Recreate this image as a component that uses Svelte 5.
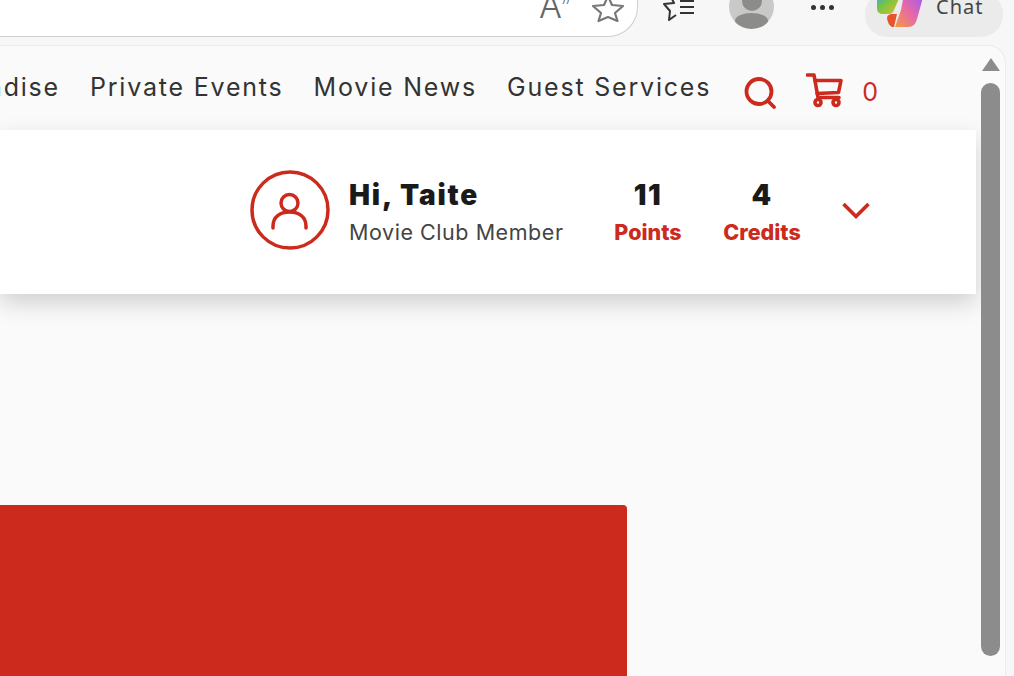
<script>
  const links = ['Merchandise', 'Private Events', 'Movie News', 'Guest Services'];
  const stats = [
    { value: 11, label: 'Points' },
    { value: 4, label: 'Credits' }
  ];
</script>

<div class="browser">
  <header class="toolbar">
    <div class="address">
      <span class="read-aloud">A<sup>))</sup></span>
      <svg class="star" width="34" height="30" viewBox="0 0 34 30" fill="none" stroke="#777" stroke-width="2.200" stroke-linejoin="round">
        <path d="M17 -3 L21 6 L32 7 L24 14 L26.500 22 L17 18 L7.500 22 L10 14 L2 7 L13 6 Z" />
      </svg>
    </div>
    <svg class="favs" width="34" height="24" viewBox="0 0 34 24" fill="none" stroke="#333" stroke-width="2" stroke-linejoin="round">
      <path d="M9 -3 L12 3 L2 4 L8 11 L7 20 L14 15" />
      <path d="M18 1 H32 M18 7 H32 M18 13 H32" />
    </svg>
    <div class="avatar"><span class="head"></span><span class="body"></span></div>
    <div class="dots"><i></i><i></i><i></i></div>
    <div class="chat">
      <svg width="46" height="28" viewBox="0 0 46 28">
        <defs>
          <linearGradient id="cp-left" x1="0" y1="0" x2="1" y2="1">
            <stop offset="0" stop-color="#38a8c8" />
            <stop offset="0.45" stop-color="#7cc63c" />
            <stop offset="1" stop-color="#f2b52e" />
          </linearGradient>
          <linearGradient id="cp-right" x1="1" y1="0" x2="0" y2="1">
            <stop offset="0" stop-color="#9a5cf0" />
            <stop offset="0.5" stop-color="#e868a8" />
            <stop offset="1" stop-color="#f59a3c" />
          </linearGradient>
        </defs>
        <path d="M5 -6 H24 L17 10 Q15.500 14 12 14 H6 Q0 14 0 8 V2 Q0 -6 5 -6 Z" fill="url(#cp-left)" />
        <path d="M27 -6 H41 Q46 -6 45 1 L40 19 Q38 27 31 27 H18 L24 10 Z" fill="url(#cp-right)" />
        <path d="M14 14 H20 L17 27 H15 Q11 25 10 18 Q10 15 14 14 Z" fill="#e8552c" />
      </svg>
      <span>Chat</span>
    </div>
  </header>

  <div class="page">
    <div class="content">
      <nav class="nav">
        {#each links as link}
          <a href="#top">{link}</a>
        {/each}
        <svg class="search" width="33" height="33" viewBox="0 0 33 33" fill="none" stroke="#cc2a1c" stroke-width="3.800" stroke-linecap="round">
          <circle cx="15" cy="15.500" r="12.500" />
          <path d="M25 26 L30 31" />
        </svg>
        <svg class="cart" width="38" height="36" viewBox="0 0 38 36" fill="none" stroke="#cc2a1c" stroke-width="3.600" stroke-linecap="round" stroke-linejoin="round">
          <path d="M1.500 2 H8 L12 24.500 H33" />
          <path d="M9 7.500 H35 L32.500 19.500 L11 20.500" />
          <circle cx="12" cy="29.500" r="3" />
          <circle cx="30" cy="29.500" r="3" />
        </svg>
        <span class="count">0</span>
      </nav>

      <section class="account">
        <svg class="user" width="80" height="80" viewBox="0 0 80 80" fill="none" stroke="#cc2a1c" stroke-width="3.500">
          <circle cx="40" cy="40" r="38" />
          <circle cx="39.500" cy="33" r="8.500" />
          <path d="M23 58 V56 C23 47 30 42 39.500 42 C49 42 56 47 56 56 V58" stroke-linecap="round" />
        </svg>
        <div class="who">
          <strong>Hi, Taite</strong>
          <span>Movie Club Member</span>
        </div>
        {#each stats as stat}
          <div class="stat">
            <strong>{stat.value}</strong>
            <span>{stat.label}</span>
          </div>
        {/each}
        <svg class="chevron" width="28" height="18" viewBox="0 0 28 18" fill="none" stroke="#cc2a1c" stroke-width="3.600">
          <path d="M1.500 2 L14 14.500 L26.500 2" />
        </svg>
      </section>

      <div class="banner"></div>
    </div>

    <aside class="scrollbar">
      <span class="arrow"></span>
      <span class="thumb"></span>
    </aside>
  </div>
</div>

<style>
  :global(body) {
    margin: 0;
    background: #f7f7f7;
  }

  .browser {
    width: 1014px;
    height: 676px;
    display: flex;
    flex-direction: column;
    overflow: hidden;
    background: #f7f7f7;
    font-family: Inter, "Open Sans", sans-serif;
  }

  .toolbar {
    height: 45px;
    flex: none;
    display: flex;
    align-items: flex-start;
    overflow: hidden;
  }

  .address {
    width: 638px;
    height: 37px;
    flex: none;
    box-sizing: border-box;
    display: flex;
    align-items: flex-start;
    justify-content: flex-end;
    gap: 21px;
    padding-right: 12px;
    background: #fff;
    border: 1px solid #cfcfcf;
    border-width: 0 1px 1px 0;
    border-bottom-right-radius: 30px;
  }

  .read-aloud {
    margin-top: -12px;
    font-size: 34px;
    font-weight: 300;
    line-height: 36px;
    color: #666;
  }

  .read-aloud sup {
    font-size: 11px;
    font-weight: 400;
    line-height: 0;
    vertical-align: 16px;
  }

  .star {
    margin-top: -1px;
  }

  .favs {
    margin-left: 24px;
    flex: none;
  }

  .avatar {
    position: relative;
    margin: -16px 0 0 33px;
    width: 45px;
    height: 45px;
    flex: none;
    overflow: hidden;
    border-radius: 50%;
    background: #c9c9c7;
  }

  .head {
    position: absolute;
    left: 13px;
    top: 7px;
    width: 20px;
    height: 20px;
    border-radius: 50%;
    background: #8c8c8a;
  }

  .body {
    position: absolute;
    left: 6px;
    top: 29px;
    width: 33px;
    height: 16px;
    border-radius: 50%;
    background: #8c8c8a;
  }

  .dots {
    margin: 5px 0 0 37px;
    display: flex;
    gap: 4px;
    flex: none;
  }

  .dots i {
    width: 5px;
    height: 5px;
    border-radius: 50%;
    background: #333;
  }

  .chat {
    margin: -8px 0 0 31px;
    padding-left: 12px;
    width: 138px;
    height: 45px;
    flex: none;
    box-sizing: border-box;
    display: flex;
    align-items: flex-start;
    gap: 13px;
    border-radius: 22px;
    background: #ebebeb;
    font-family: "Noto Sans", sans-serif;
    font-size: 20px;
    letter-spacing: 1px;
    color: #444;
  }

  .chat svg {
    margin-top: 8px;
    flex: none;
  }

  .chat span {
    line-height: 30px;
  }

  .page {
    flex: 1;
    min-height: 0;
    margin-right: 8px;
    display: flex;
    overflow: hidden;
    background: #fafafa;
    border: 1px solid #ececec;
    border-width: 1px 1px 0 0;
    border-top-right-radius: 18px;
  }

  .content {
    flex: 1;
    min-width: 0;
    display: flex;
    flex-direction: column;
  }

  .nav {
    height: 84px;
    flex: none;
    box-sizing: border-box;
    display: flex;
    align-items: flex-start;
    white-space: nowrap;
    justify-content: flex-end;
    padding-right: 98px;
  }

  .nav a {
    margin: 25px 30px 0 0;
    font-size: 25px;
    line-height: 32px;
    color: #333;
    text-decoration: none;
    font-weight: 400;
    letter-spacing: 1.800px;
  }

  .nav a:nth-of-type(4) {
    margin-right: 33px;
  }

  .search {
    margin-top: 30px;
    flex: none;
  }

  .cart {
    margin: 27px 0 0 29px;
    flex: none;
  }

  .count {
    margin: 29px 0 0 18px;
    font-size: 25px;
    line-height: 34px;
    color: #cc2a1c;
  }

  .account {
    height: 164px;
    flex: none;
    box-sizing: border-box;
    display: flex;
    align-items: center;
    padding-left: 250px;
    background: #fff;
    box-shadow: 0 9px 22px rgba(0, 0, 0, 0.17);
  }

  .user {
    margin-bottom: 4px;
    flex: none;
  }

  .who {
    margin: 3px 0 0 19px;
    width: 242px;
    display: flex;
    flex-direction: column;
    gap: 7px;
  }

  .who strong {
    font-size: 28px;
    line-height: 30px;
    font-weight: 900;
    letter-spacing: 1.800px;
    color: #1a1a1a;
  }

  .who span {
    font-size: 21.500px;
    line-height: 30px;
    letter-spacing: 0.550px;
    color: #444;
  }

  .stat {
    margin-top: 3px;
    width: 114px;
    display: flex;
    flex-direction: column;
    align-items: center;
    gap: 7px;
  }

  .stat strong {
    font-size: 28px;
    line-height: 30px;
    font-weight: 900;
    letter-spacing: 1.500px;
    color: #1a1a1a;
  }

  .stat span {
    font-size: 21.500px;
    line-height: 30px;
    font-weight: 800;
    color: #cc2a1c;
  }

  .chevron {
    margin: 0 0 2px 23px;
    flex: none;
  }

  .banner {
    width: 627px;
    height: 171px;
    margin-top: 211px;
    flex: none;
    border-top-right-radius: 4px;
    background: #cc2a1c;
  }

  .scrollbar {
    width: 29px;
    flex: none;
    display: flex;
    flex-direction: column;
    align-items: center;
  }

  .arrow {
    margin-top: 12px;
    width: 0;
    height: 0;
    border-left: 9px solid transparent;
    border-right: 9px solid transparent;
    border-bottom: 13px solid #8c8c8c;
  }

  .thumb {
    margin-top: 12px;
    width: 19px;
    height: 573px;
    border-radius: 10px;
    background: #8c8c8c;
  }
</style>
